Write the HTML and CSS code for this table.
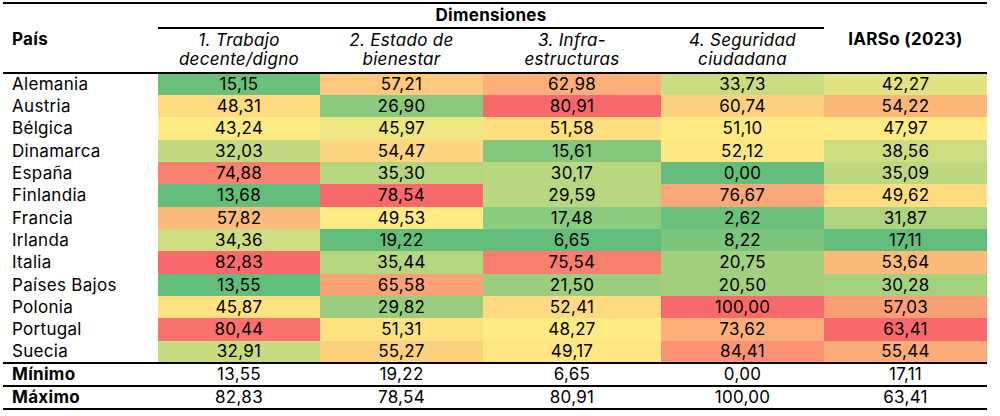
FILE: index.html
```html
<!DOCTYPE html>
<html lang="es">
<head>
<meta charset="utf-8">
<title>IARSo (2023)</title>
<link rel="stylesheet" href="styles.css">
</head>
<body>
<div class="wrap">
<table class="t">
<colgroup>
<col class="c0"><col class="c1"><col class="c2"><col class="c3"><col class="c4"><col class="c5">
</colgroup>
<thead>
<tr class="h1"><th></th><th colspan="4" class="dim">Dimensiones</th><th></th></tr>
<tr class="h2">
<th class="pais">País</th>
<th class="sub">1. Trabajo<br>decente/digno</th>
<th class="sub">2. Estado de<br>bienestar</th>
<th class="sub">3. Infra-<br>estructuras</th>
<th class="sub">4. Seguridad<br>ciudadana</th>
<th class="iarso">IARSo (2023)</th>
</tr>
</thead>
<tbody class="data">
<tr><td>Alemania</td><td>15,15</td><td>57,21</td><td>62,98</td><td>33,73</td><td>42,27</td></tr>
<tr><td>Austria</td><td>48,31</td><td>26,90</td><td>80,91</td><td>60,74</td><td>54,22</td></tr>
<tr><td>Bélgica</td><td>43,24</td><td>45,97</td><td>51,58</td><td>51,10</td><td>47,97</td></tr>
<tr><td>Dinamarca</td><td>32,03</td><td>54,47</td><td>15,61</td><td>52,12</td><td>38,56</td></tr>
<tr><td>España</td><td>74,88</td><td>35,30</td><td>30,17</td><td>0,00</td><td>35,09</td></tr>
<tr><td>Finlandia</td><td>13,68</td><td>78,54</td><td>29,59</td><td>76,67</td><td>49,62</td></tr>
<tr><td>Francia</td><td>57,82</td><td>49,53</td><td>17,48</td><td>2,62</td><td>31,87</td></tr>
<tr><td>Irlanda</td><td>34,36</td><td>19,22</td><td>6,65</td><td>8,22</td><td>17,11</td></tr>
<tr><td>Italia</td><td>82,83</td><td>35,44</td><td>75,54</td><td>20,75</td><td>53,64</td></tr>
<tr><td>Países Bajos</td><td>13,55</td><td>65,58</td><td>21,50</td><td>20,50</td><td>30,28</td></tr>
<tr><td>Polonia</td><td>45,87</td><td>29,82</td><td>52,41</td><td>100,00</td><td>57,03</td></tr>
<tr><td>Portugal</td><td>80,44</td><td>51,31</td><td>48,27</td><td>73,62</td><td>63,41</td></tr>
<tr class="last"><td>Suecia</td><td>32,91</td><td>55,27</td><td>49,17</td><td>84,41</td><td>55,44</td></tr>
</tbody>
<tbody class="stats">
<tr class="min"><td>Mínimo</td><td>13,55</td><td>19,22</td><td>6,65</td><td>0,00</td><td>17,11</td></tr>
<tr class="max"><td>Máximo</td><td>82,83</td><td>78,54</td><td>80,91</td><td>100,00</td><td>63,41</td></tr>
</tbody>
</table>
</div>
<script src="script.js"></script>
</body>
</html>
```
FILE: styles.css
```css
html, body {
  margin: 0;
  padding: 0;
  background: #fff;
}
body {
  font-family: Inter, "Liberation Sans", sans-serif;
  font-size: 17px;
  color: #000;
}
.wrap {
  padding: 2px 0 0 3px;
}
.t {
  border-collapse: collapse;
  table-layout: fixed;
  width: 984px;
  letter-spacing: 0.3px;
}
.c0 { width: 155px; }
.c1 { width: 162px; }
.c2 { width: 163px; }
.c3 { width: 178px; }
.c4 { width: 163px; }
.c5 { width: 163px; }

.t th, .t td {
  padding: 0;
  line-height: 19px;
}
.h1 th {
  border-top: 2px solid #000;
  height: 23px;
  font-weight: 700;
  text-align: center;
}
.h1 .dim {
  border-bottom: 2px solid #000;
}
.h2 th {
  height: 41px;
  vertical-align: top;
  padding-top: 2px;
  border-bottom: 2px solid #000;
}
.h2 .pais {
  text-align: left;
  padding-left: 9px;
  font-weight: 700;
}
.h2 .sub {
  font-style: italic;
  font-weight: 400;
  text-align: center;
}
.h2 .iarso {
  font-weight: 700;
  text-align: center;
}
.data tr {
  height: 22px;
}
.data tr:nth-child(3n) {
  height: 23px;
}
.t td {
  text-align: center;
}
.t td:first-child {
  text-align: left;
  padding-left: 9px;
}
.data .last td {
  border-bottom: 2px solid #000;
}
.stats tr {
  height: 23px;
}
.stats td {
  border-bottom: 2px solid #000;
}
.stats td:first-child {
  font-weight: 700;
}
```
FILE: script.js
```js
(function () {
  var LOW = [99, 190, 123], MID = [255, 235, 132], HIGH = [248, 105, 107];
  var rows = document.querySelectorAll('.data tr');
  function num(s) { return parseFloat(s.replace(',', '.')); }
  for (var c = 1; c <= 5; c++) {
    var cells = [], vals = [];
    rows.forEach(function (r) {
      var td = r.children[c];
      cells.push(td);
      vals.push(num(td.textContent));
    });
    var s = vals.slice().sort(function (a, b) { return a - b; });
    var min = s[0], max = s[s.length - 1];
    var pos = (s.length - 1) * 0.5, lo = Math.floor(pos), hi = Math.ceil(pos);
    var mid = s[lo] + (s[hi] - s[lo]) * (pos - lo);
    cells.forEach(function (td, i) {
      var v = vals[i], a, b, t;
      if (v <= mid) { a = LOW; b = MID; t = mid === min ? 0 : (v - min) / (mid - min); }
      else { a = MID; b = HIGH; t = max === mid ? 0 : (v - mid) / (max - mid); }
      var col = a.map(function (x, k) { return Math.round(x + (b[k] - x) * t); });
      td.style.backgroundColor = 'rgb(' + col.join(',') + ')';
    });
  }
})();
```
